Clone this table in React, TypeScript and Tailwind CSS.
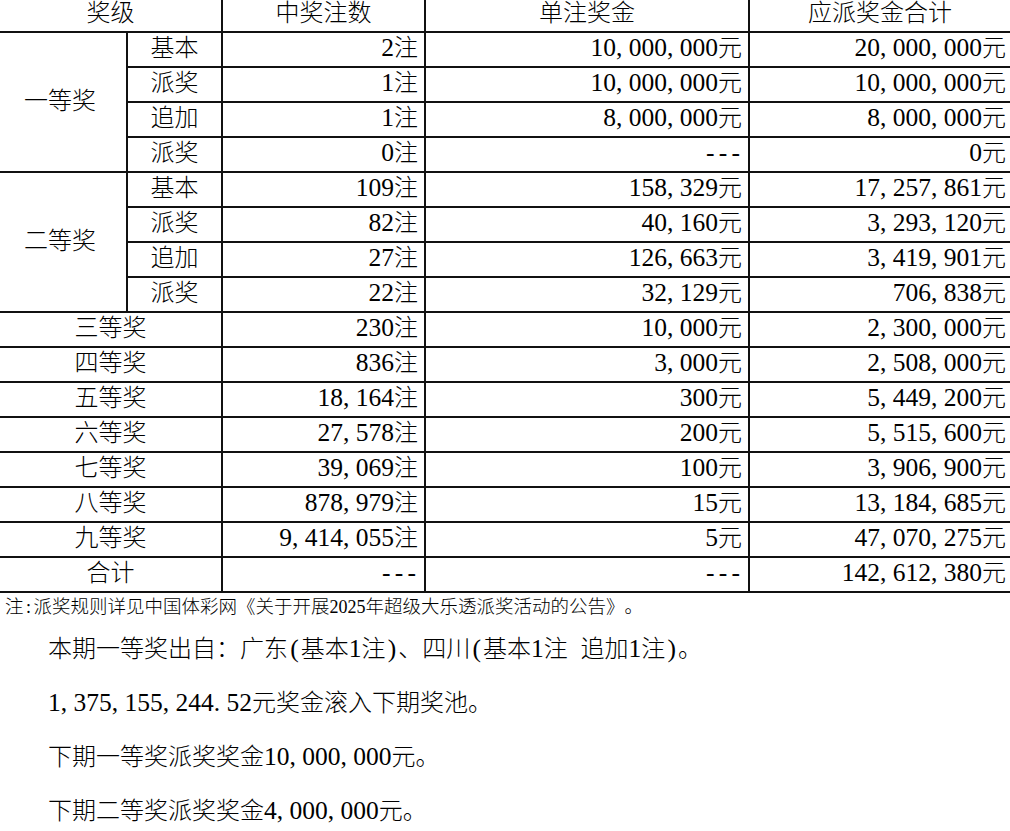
import React from "react";

type Row = {
  group?: string;
  span?: number;
  sub?: string;
  count: string;
  unit: string;
  total: string;
};

const rows: Row[] = [
  { group: "一等奖", span: 4, sub: "基本", count: "2", unit: "10,000,000元", total: "20,000,000元" },
  { sub: "派奖", count: "1", unit: "10,000,000元", total: "10,000,000元" },
  { sub: "追加", count: "1", unit: "8,000,000元", total: "8,000,000元" },
  { sub: "派奖", count: "0", unit: "---", total: "0元" },
  { group: "二等奖", span: 4, sub: "基本", count: "109", unit: "158,329元", total: "17,257,861元" },
  { sub: "派奖", count: "82", unit: "40,160元", total: "3,293,120元" },
  { sub: "追加", count: "27", unit: "126,663元", total: "3,419,901元" },
  { sub: "派奖", count: "22", unit: "32,129元", total: "706,838元" },
  { group: "三等奖", count: "230", unit: "10,000元", total: "2,300,000元" },
  { group: "四等奖", count: "836", unit: "3,000元", total: "2,508,000元" },
  { group: "五等奖", count: "18,164", unit: "300元", total: "5,449,200元" },
  { group: "六等奖", count: "27,578", unit: "200元", total: "5,515,600元" },
  { group: "七等奖", count: "39,069", unit: "100元", total: "3,906,900元" },
  { group: "八等奖", count: "878,979", unit: "15元", total: "13,184,685元" },
  { group: "九等奖", count: "9,414,055", unit: "5元", total: "47,070,275元" },
];

// Latin runs are set a touch larger and punctuation gets a half-width cell,
// so numbers take the same room as in the original song-style typeface.
const T = ({
  v,
  latin = "text-[25.5px]",
  box = "w-[12.75px]",
}: {
  v: string;
  latin?: string;
  box?: string;
}) => (
  <>
    {v.split(/([\x20-\x7e]+)/).map((part, i) =>
      /^[\x20-\x7e]+$/.test(part) ? (
        <span key={i} className={latin}>
          {part.split("").map((c, j) =>
            /[0-9A-Za-z]/.test(c) ? (
              <React.Fragment key={j}>{c}</React.Fragment>
            ) : (
              <span key={j} className={`inline-block ${box} ${c === "," || c === "." ? "text-left" : "text-center"}`}>
                {c === " " ? "\u00a0" : c}
              </span>
            )
          )}
        </span>
      ) : (
        <React.Fragment key={i}>{part}</React.Fragment>
      )
    )}
  </>
);

const line = "border-[#111]";
const cell = `h-[35px] p-0 pb-[3px] border-b-2 border-r-2 ${line} align-middle font-light`;
const numCell = `${cell} text-right pr-[6px]`;
const lastCell = `h-[35px] p-0 pb-[3px] pr-[4px] border-b-2 ${line} text-right align-middle font-light`;

const App = () => (
  <div
    className="w-[1010px] h-[831px] overflow-hidden bg-white text-black [text-spacing-trim:space-all]"
    style={{ fontFamily: "'Liberation Serif', 'Noto Sans CJK SC', serif" }}
  >
    <table className="-mt-[3px] w-[1010px] table-fixed border-collapse text-[24px] leading-[28px]">
      <colgroup>
        <col className="w-[127px]" />
        <col className="w-[95px]" />
        <col className="w-[203px]" />
        <col className="w-[324px]" />
        <col className="w-[261px]" />
      </colgroup>
      <thead>
        <tr>
          <th colSpan={2} className={`${cell} text-center`}>奖级</th>
          <th className={`${cell} text-center`}>中奖注数</th>
          <th className={`${cell} text-center`}>单注奖金</th>
          <th className={`h-[35px] p-0 pb-[3px] border-b-2 ${line} text-center align-middle font-light`}>应派奖金合计</th>
        </tr>
      </thead>
      <tbody>
        {rows.map((r, i) => (
          <tr key={i}>
            {r.group && r.span && (
              <td rowSpan={r.span} className={`${cell} text-center pr-[6px]`}>
                {r.group}
              </td>
            )}
            {r.group && !r.span && (
              <td colSpan={2} className={`${cell} text-center`}>
                {r.group}
              </td>
            )}
            {r.sub && <td className={`${cell} text-center`}>{r.sub}</td>}
            <td className={numCell}>
              <T v={`${r.count}注`} />
            </td>
            <td className={numCell}>
              <T v={r.unit} />
            </td>
            <td className={lastCell}>
              <T v={r.total} />
            </td>
          </tr>
        ))}
        <tr>
          <td colSpan={2} className={`${cell} text-center`}>合计</td>
          <td className={numCell}>
            <T v="---" />
          </td>
          <td className={numCell}>
            <T v="---" />
          </td>
          <td className={lastCell}>
            <T v="142,612,380元" />
          </td>
        </tr>
      </tbody>
    </table>

    <p className="pl-[5px] pt-[2px] text-[18.5px] leading-[24px] font-light">
      <T v="注:派奖规则详见中国体彩网《关于开展2025年超级大乐透派奖活动的公告》。" latin="text-[18px]" box="w-[10px]" />
    </p>

    <div className="flex flex-col gap-[24px] pl-[48px] pt-[15px] text-[24px] leading-[29px] font-light">
      <p>
        <T v="本期一等奖出自：广东(基本1注)、四川(基本1注 追加1注)。" />
      </p>
      <p>
        <T v="1,375,155,244.52元奖金滚入下期奖池。" />
      </p>
      <p>
        <T v="下期一等奖派奖奖金10,000,000元。" />
      </p>
      <p>
        <T v="下期二等奖派奖奖金4,000,000元。" />
      </p>
    </div>
  </div>
);

export default App;
